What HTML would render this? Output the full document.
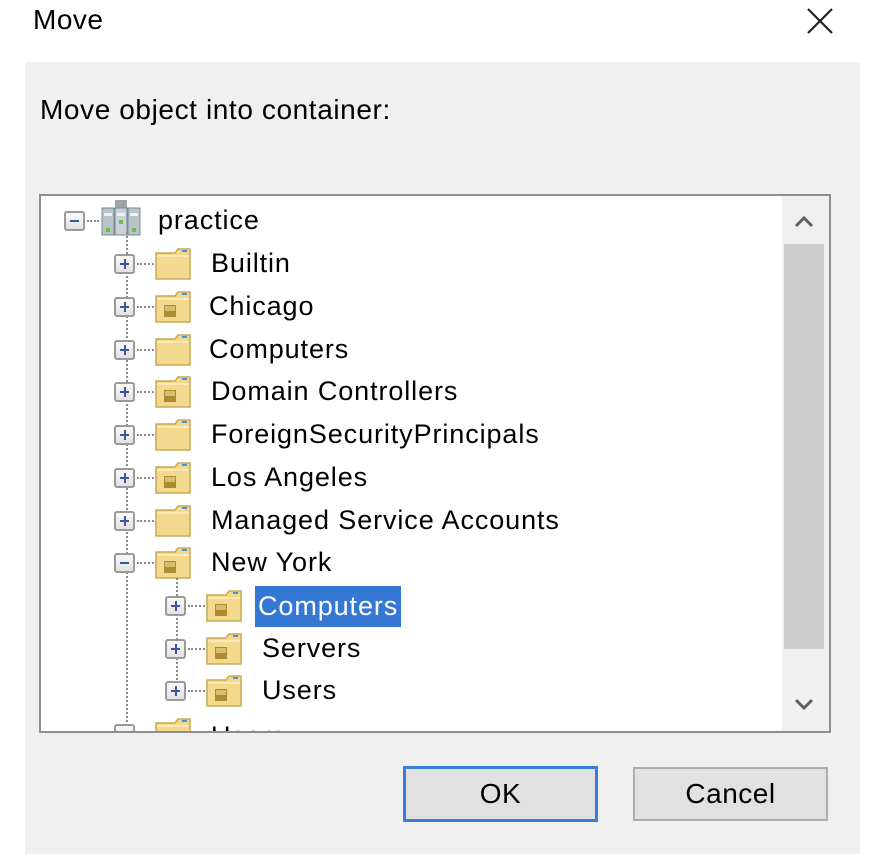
<!DOCTYPE html>
<html><head><meta charset="utf-8"><style>
*{margin:0;padding:0;box-sizing:border-box}
body{width:872px;height:862px;background:#fff;position:relative;overflow:hidden;font-family:"Liberation Sans",sans-serif;color:#000}
.a{position:absolute}
.panel{left:25px;top:62px;width:835px;height:792px;background:#f0f0f0}
.tree{left:39px;top:194px;width:792px;height:539px;background:#fff;border:2px solid #8b8e92;overflow:hidden}
.t{position:absolute;font-size:27px;line-height:32px;white-space:nowrap;letter-spacing:0.9px}
.box{position:absolute;width:21px;height:20px;border:2px solid #9a9a9a;border-radius:3px;background:linear-gradient(#fafafa,#e2e2e2)}
.box:before{content:"";position:absolute;left:4px;top:7px;width:9px;height:2px;background:#3b56a0}
.box.p:after{content:"";position:absolute;left:7.5px;top:3px;width:2px;height:10px;background:#3b56a0}
.h{position:absolute;height:0;border-top:2px dotted #8a8a8a}
.v{position:absolute;width:0;border-left:2px dotted #8a8a8a}
.sel{background:#3478d4;color:#fff;padding:0 3px}
.btn{position:absolute;background:#e1e1e1;font-size:28px;text-align:center;line-height:50px;letter-spacing:0.5px}
</style></head><body>
<svg width="0" height="0" style="position:absolute"><defs>
<g id="f"><path d="M1 6 L20 6 L23 2 L35 2 L35 32 L1 32 Z" fill="#f3d98e" stroke="#c9a954" stroke-width="1.5"/><path d="M2 9 L34 9" stroke="#fbeab8" stroke-width="2"/><rect x="27" y="3" width="5" height="2" fill="#4a90e0"/></g>
<g id="o"><use href="#f"/><rect x="9" y="15" width="12" height="12" fill="#b08a2e"/><rect x="10" y="16" width="10" height="5" fill="#d8bd6e"/></g>
</defs></svg>
<div class="a" style="left:33px;top:4px;font-size:28px;letter-spacing:0.5px">Move</div>
<svg class="a" style="left:806px;top:7px" width="28" height="28"><path d="M2 2 L26 26 M26 2 L2 26" stroke="#222" stroke-width="2.2"/></svg>
<div class="a panel"></div>
<div class="a" style="left:40px;top:94px;font-size:28px;letter-spacing:0.6px">Move object into container:</div>
<div class="a tree">
 <div class="box" style="left:23px;top:15px"></div>
 <div class="h" style="left:46px;top:24px;width:12px"></div>
 <svg class="a" style="left:60px;top:4px" width="40" height="36">
  <rect x="14" y="0" width="12" height="10" fill="#9aa5ad"/><rect x="1" y="8" width="12" height="27" fill="#b8c3ca" stroke="#7d8a93"/><rect x="14" y="8" width="12" height="27" fill="#c8d2d8" stroke="#7d8a93"/><rect x="27" y="8" width="12" height="27" fill="#b8c3ca" stroke="#7d8a93"/><rect x="3" y="13" width="8" height="3" fill="#eef2f4"/><rect x="16" y="13" width="8" height="3" fill="#eef2f4"/><rect x="29" y="13" width="8" height="3" fill="#eef2f4"/><rect x="5" y="28" width="4" height="4" fill="#5fc43a"/><rect x="18" y="20" width="4" height="4" fill="#5fc43a"/><rect x="31" y="28" width="4" height="4" fill="#5fc43a"/></svg>
 <div class="t" style="left:117px;top:8px">practice</div>
 <div class="v" style="left:85px;top:36px;height:510px"></div>
 <div class="box p" style="left:73px;top:58px"></div><div class="h" style="left:96px;top:67px;width:17px"></div><svg class="a" style="left:114px;top:51px" width="37" height="34"><use href="#f"/></svg><div class="t" style="left:170px;top:51px">Builtin</div>
 <div class="box p" style="left:73px;top:101px"></div><div class="h" style="left:96px;top:110px;width:17px"></div><svg class="a" style="left:114px;top:94px" width="37" height="34"><use href="#o"/></svg><div class="t" style="left:168px;top:94px">Chicago</div>
 <div class="box p" style="left:73px;top:144px"></div><div class="h" style="left:96px;top:153px;width:17px"></div><svg class="a" style="left:114px;top:137px" width="37" height="34"><use href="#f"/></svg><div class="t" style="left:168px;top:137px">Computers</div>
 <div class="box p" style="left:73px;top:186px"></div><div class="h" style="left:96px;top:195px;width:17px"></div><svg class="a" style="left:114px;top:179px" width="37" height="34"><use href="#o"/></svg><div class="t" style="left:170px;top:179px">Domain Controllers</div>
 <div class="box p" style="left:73px;top:229px"></div><div class="h" style="left:96px;top:238px;width:17px"></div><svg class="a" style="left:114px;top:222px" width="37" height="34"><use href="#f"/></svg><div class="t" style="left:170px;top:222px">ForeignSecurityPrincipals</div>
 <div class="box p" style="left:73px;top:272px"></div><div class="h" style="left:96px;top:281px;width:17px"></div><svg class="a" style="left:114px;top:265px" width="37" height="34"><use href="#o"/></svg><div class="t" style="left:170px;top:265px">Los Angeles</div>
 <div class="box p" style="left:73px;top:315px"></div><div class="h" style="left:96px;top:324px;width:17px"></div><svg class="a" style="left:114px;top:308px" width="37" height="34"><use href="#f"/></svg><div class="t" style="left:170px;top:308px">Managed Service Accounts</div>
 <div class="box" style="left:73px;top:357px"></div><div class="h" style="left:96px;top:366px;width:17px"></div><svg class="a" style="left:114px;top:350px" width="37" height="34"><use href="#o"/></svg><div class="t" style="left:170px;top:350px">New York</div>
 <div class="v" style="left:135px;top:382px;height:114px"></div>
 <div class="box p" style="left:124px;top:400px"></div><div class="h" style="left:147px;top:409px;width:17px"></div><svg class="a" style="left:165px;top:393px" width="37" height="34"><use href="#o"/></svg><div class="t sel" style="left:214px;top:390px;height:41px;line-height:41px">Computers</div>
 <div class="box p" style="left:124px;top:443px"></div><div class="h" style="left:147px;top:452px;width:17px"></div><svg class="a" style="left:165px;top:436px" width="37" height="34"><use href="#o"/></svg><div class="t" style="left:221px;top:436px">Servers</div>
 <div class="box p" style="left:124px;top:485px"></div><div class="h" style="left:147px;top:494px;width:17px"></div><svg class="a" style="left:165px;top:478px" width="37" height="34"><use href="#o"/></svg><div class="t" style="left:221px;top:478px">Users</div>
 <div class="box" style="left:73px;top:528px"></div><svg class="a" style="left:114px;top:521px" width="37" height="34"><use href="#f"/></svg><div class="t" style="left:170px;top:524px">Users</div>
 <div class="a" style="left:741px;top:0;width:47px;height:535px;background:#f0f0f0"></div>
 <div class="a" style="left:743px;top:48px;width:40px;height:405px;background:#cdcdcd"></div>
 <svg class="a" style="left:752px;top:18px" width="22" height="16"><path d="M3 12 L11 4 L19 12" fill="none" stroke="#606060" stroke-width="3"/></svg>
 <svg class="a" style="left:752px;top:500px" width="22" height="16"><path d="M3 4 L11 12 L19 4" fill="none" stroke="#606060" stroke-width="3"/></svg>
</div>
<div class="btn" style="left:403px;top:766px;width:195px;height:56px;border:3px solid #3a7ed8">OK</div>
<div class="btn" style="left:633px;top:767px;width:195px;height:54px;border:2px solid #adadad">Cancel</div>
</body></html>
